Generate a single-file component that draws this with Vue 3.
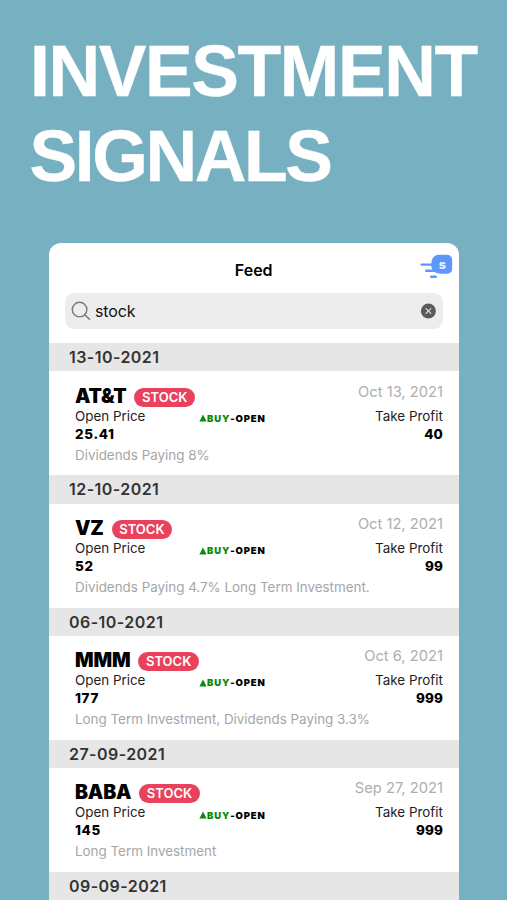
<script setup>
const sections = [
  { day: '13-10-2021', symbol: 'AT&T', date: 'Oct 13, 2021', open: '25.41', profit: '40', note: 'Dividends Paying 8%' },
  { day: '12-10-2021', symbol: 'VZ', date: 'Oct 12, 2021', open: '52', profit: '99', note: 'Dividends Paying 4.7% Long Term Investment.' },
  { day: '06-10-2021', symbol: 'MMM', date: 'Oct 6, 2021', open: '177', profit: '999', note: 'Long Term Investment, Dividends Paying 3.3%' },
  { day: '27-09-2021', symbol: 'BABA', date: 'Sep 27, 2021', open: '145', profit: '999', note: 'Long Term Investment' },
  { day: '09-09-2021' },
]
</script>

<template>
  <main class="page">
    <h1 class="headline">
      <span class="line first">INVESTMENT</span>
      <span class="line second">SIGNALS</span>
    </h1>
    <section class="phone">
      <header class="bar">
        <span></span>
        <span class="title">Feed</span>
        <svg class="logo" width="34" height="26" viewBox="0 0 34 26">
          <g stroke="#5f97f8" stroke-width="2.4" stroke-linecap="round">
            <path d="M2.6 10.6H14M7.2 16.8H17M12.2 22.8H16.8" />
          </g>
          <path d="M20 .8H27.5Q33.2 .8 33.2 6.5V14Q33.2 19.8 27.5 19.8H21Q17 19.8 14.5 17Q11.9 14 12.3 9.5Q13 .8 20 .8Z" fill="#5f97f8" />
          <text x="23.4" y="14.6" text-anchor="middle" class="logo-letter">s</text>
        </svg>
      </header>
      <div class="search">
        <svg width="20" height="20" viewBox="0 0 20 20" fill="none" stroke="#77777b" stroke-width="1.4" stroke-linecap="round">
          <circle cx="8.6" cy="8.6" r="7.3" />
          <path d="M13.9 13.9L18.5 18.3" />
        </svg>
        <span class="query">stock</span>
        <svg width="16" height="16" viewBox="0 0 16 16">
          <circle cx="8.4" cy="8" r="7.5" fill="#5b5b5d" />
          <path d="M6 5.6L10.8 10.4M10.8 5.6L6 10.4" stroke="#ddd" stroke-width="1.2" stroke-linecap="round" />
        </svg>
      </div>
      <template v-for="s in sections" :key="s.day">
        <h2 class="day">{{ s.day }}</h2>
        <article v-if="s.symbol" class="signal">
          <div class="top">
            <span class="symbol">{{ s.symbol }}</span>
            <span class="tag">STOCK</span>
            <span class="date">{{ s.date }}</span>
          </div>
          <div class="labels">
            <span class="label">Open Price</span>
            <span class="action">
              <svg width="8" height="8" viewBox="0 0 8 8"><path d="M4 .5L7.6 7.4H.4Z" fill="#0c8a0c" /></svg>
              <span class="buy">BUY</span><span>-OPEN</span>
            </span>
            <span class="label">Take Profit</span>
          </div>
          <div class="values">
            <span>{{ s.open }}</span>
            <span class="profit">{{ s.profit }}</span>
          </div>
          <p class="note">{{ s.note }}</p>
        </article>
      </template>
    </section>
  </main>
</template>

<style>
body {
  margin: 0;
  background: #76b0c1;
}
</style>

<style scoped>
.page {
  box-sizing: border-box;
  width: 507px;
  height: 900px;
  overflow: hidden;
  background: #76b0c1;
  font-family: Inter, "Liberation Sans", sans-serif;
  white-space: nowrap;
}
.headline {
  margin: 0;
  height: 242.5px;
  padding: 29px 0 0 30px;
  box-sizing: border-box;
  color: #fff;
  font: bold 71.5px/85px "Liberation Sans", sans-serif;
  -webkit-text-stroke: 0.4px #fff;
}
.line {
  display: block;
}
.first {
  letter-spacing: -1.4px;
}
.second {
  margin-left: -0.5px;
  letter-spacing: -2.4px;
}
.phone {
  width: 410.4px;
  height: 700px;
  margin-left: 49px;
  overflow: hidden;
  background: #fff;
  border-radius: 12px 12px 0 0;
}
.bar {
  display: grid;
  grid-template-columns: 1fr auto 1fr;
  align-items: center;
  height: 50.5px;
  padding: 0 6px 0 5px;
}
.title {
  padding-top: 5px;
  font-size: 16px;
  font-weight: 600;
  color: #000;
}
.logo {
  justify-self: end;
  margin-bottom: 1px;
}
.logo-letter {
  font: 800 12.5px Inter, sans-serif;
  fill: #e8f0ff;
}
.search {
  display: flex;
  align-items: center;
  box-sizing: border-box;
  height: 35.5px;
  margin: 0 16.5px 14.7px 15.5px;
  padding: 0 7px 0 6.5px;
  background: #ededed;
  border-radius: 9px;
}
.query {
  flex: 1;
  padding-left: 4px;
  font-size: 16px;
  letter-spacing: -0.1px;
  color: #111;
}
.day {
  box-sizing: border-box;
  height: 28.2px;
  margin: 0;
  padding-left: 20px;
  background: #e6e6e6;
  color: #333;
  font-size: 16px;
  line-height: 28px;
  font-weight: 600;
  letter-spacing: 0.45px;
}
.signal {
  box-sizing: border-box;
  height: 104.05px;
  padding: 11.3px 16.5px 0 26px;
}
.top {
  display: flex;
  height: 24px;
  align-items: flex-start;
}
.symbol {
  font-size: 19.5px;
  line-height: 27px;
  font-weight: 900;
  letter-spacing: -0.2px;
  color: #000;
}
.tag {
  height: 19px;
  margin: 5px 0 0 8px;
  padding: 0 7.6px;
  border-radius: 10px;
  background: #e9425c;
  color: #fff;
  font-size: 13px;
  line-height: 19px;
  font-weight: 600;
}
.date {
  margin-left: auto;
  color: #aeaeae;
  font-size: 14.7px;
  line-height: 19px;
}
.labels {
  display: grid;
  grid-template-columns: 124px 1fr auto;
  height: 18px;
}
.label {
  color: #222;
  font-size: 13.4px;
  line-height: 18px;
}
.action {
  display: flex;
  align-items: center;
  height: 23.4px;
  color: #000;
  font-size: 9.5px;
  font-weight: 900;
  letter-spacing: 0.85px;
}
.buy {
  color: #0c8a0c;
}
.values {
  display: flex;
  justify-content: space-between;
  font-size: 13.4px;
  line-height: 18px;
  font-weight: 800;
  letter-spacing: 0.7px;
  color: #000;
}
.profit {
  letter-spacing: 0.1px;
}
.note {
  margin: 2px 0 0;
  color: #a6a6a6;
  font-size: 13.4px;
  line-height: 20px;
}
</style>
